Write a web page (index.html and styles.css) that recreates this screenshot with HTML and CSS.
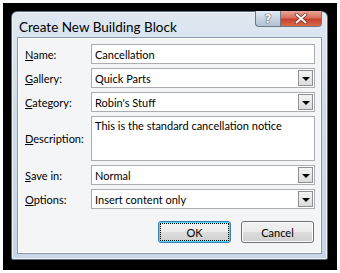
FILE: index.html
```html
<!DOCTYPE html>
<html>
<head>
<meta charset="utf-8">
<link rel="stylesheet" href="styles.css">
</head>
<body>
<div class="shadow">
  <div class="window">
    <div class="titlebar">
      <span class="title">Create New Building Block</span>
      <div class="caption-btns">
        <div class="cbtn help">?</div>
        <div class="cbtn close">
          <svg width="14" height="11" viewBox="0 0 14 11"><path d="M2.5 1.5 L11.5 9.5 M11.5 1.5 L2.5 9.5" stroke="#7a2a20" stroke-width="3.4" stroke-linecap="round"/><path d="M2.5 1.5 L11.5 9.5 M11.5 1.5 L2.5 9.5" stroke="#f6f6f6" stroke-width="2" stroke-linecap="round"/></svg>
        </div>
      </div>
    </div>
    <div class="panel">
      <div class="row">
        <label class="lbl"><u>N</u>ame:</label>
        <div class="field">Cancellation</div>
      </div>
      <div class="row">
        <label class="lbl"><u>G</u>allery:</label>
        <div class="field combo">Quick Parts<span class="arrow"></span></div>
      </div>
      <div class="row">
        <label class="lbl"><u>C</u>ategory:</label>
        <div class="field combo">Robin's Stuff<span class="arrow"></span></div>
      </div>
      <div class="row desc">
        <label class="lbl"><u>D</u>escription:</label>
        <div class="field area">This is the standard cancellation notice</div>
      </div>
      <div class="row">
        <label class="lbl"><u>S</u>ave in:</label>
        <div class="field combo">Normal<span class="arrow"></span></div>
      </div>
      <div class="row">
        <label class="lbl"><u>O</u>ptions:</label>
        <div class="field combo">Insert content only<span class="arrow"></span></div>
      </div>
      <div class="buttons">
        <div class="btn ok"><span class="focus">OK</span></div>
        <div class="btn">Cancel</div>
      </div>
    </div>
  </div>
</div>
</body>
</html>
```
FILE: styles.css
```css
html, body {
  margin: 0;
  padding: 0;
  background: #fff;
}
body {
  width: 340px;
  height: 273px;
  font-family: Lato, "Noto Sans", sans-serif;
  font-size: 11px;
  color: #000;
}
.shadow {
  margin: 3px 0 0 3px;
  width: 334px;
  height: 267px;
  background: #000;
  box-sizing: border-box;
  padding: 8px 0 0 8px;
}
.window {
  width: 317px;
  height: 249px;
  box-sizing: border-box;
  background: linear-gradient(#dfe8f1, #cfdceb 40%, #c7d6e6);
  border: 1px solid #5a6a7a;
  border-radius: 6px 6px 2px 2px;
  box-shadow: inset 0 0 0 1px #eef4fa;
  padding: 0 5px 5px 5px;
  display: flex;
  flex-direction: column;
}
.titlebar {
  height: 25px;
  display: flex;
  justify-content: space-between;
  align-items: flex-start;
}
.title {
  font-family: Lato, sans-serif;
  font-size: 13.5px;
  padding: 7px 0 0 2px;
  color: #000;
}
.caption-btns {
  display: flex;
  margin-top: -1px;
}
.cbtn {
  height: 16px;
  box-sizing: border-box;
  border: 1px solid #6b7888;
  border-top: none;
  display: flex;
  align-items: center;
  justify-content: center;
}
.help {
  width: 25px;
  border-radius: 0 0 0 4px;
  border-right: none;
  background: linear-gradient(#e4ecf4, #c8d4e2 50%, #b2c2d4);
  color: #fff;
  font-family: "DejaVu Sans", sans-serif;
  font-weight: bold;
  font-size: 12px;
  text-shadow: 0 0 1px #405060, 0 0 1px #405060, 0 0 1px #405060;
}
.close {
  width: 42px;
  border-radius: 0 0 4px 0;
  background: linear-gradient(#e8a89a, #d7705d 45%, #c6412d 55%, #d96a48);
}
.panel {
  flex: 1;
  border: 1px solid #8c9cad;
  background: #f4f5f6;
  box-shadow: inset 0 0 0 1px #ffffff;
  padding: 6px 6px 0 7px;
  display: flex;
  flex-direction: column;
  gap: 4px;
}
.row {
  display: flex;
  align-items: center;
  height: 20px;
}
.row.desc {
  height: 45px;
}
.lbl {
  width: 66px;
  color: #000;
}
.lbl u {
  text-decoration: underline;
  text-underline-offset: 1px;
}
.field {
  flex: 1;
  height: 100%;
  box-sizing: border-box;
  border: 1px solid #abadb3;
  background: #fff;
  padding: 0 3px;
  display: flex;
  align-items: center;
  position: relative;
}
.field.area {
  align-items: flex-start;
  padding-top: 2px;
}
.combo .arrow {
  position: absolute;
  right: 1px;
  top: 1px;
  width: 15px;
  height: 16px;
  box-sizing: border-box;
  border: 1px solid #8e8f8f;
  background: linear-gradient(#f4f4f4, #dcdcdc);
}
.combo .arrow::after {
  content: "";
  position: absolute;
  left: 3px;
  top: 6px;
  border-left: 4px solid transparent;
  border-right: 4px solid transparent;
  border-top: 4px solid #000;
}
.buttons {
  display: flex;
  justify-content: flex-end;
  gap: 10px;
  margin-top: 8px;
  padding-right: 1px;
}
.btn {
  width: 73px;
  height: 22px;
  box-sizing: border-box;
  border: 1px solid #707070;
  border-radius: 3px;
  background: linear-gradient(#f2f2f2 0%, #ebebeb 48%, #dddddd 52%, #cfcfcf 100%);
  box-shadow: inset 0 0 0 1px #fbfbfb;
  display: flex;
  align-items: center;
  justify-content: center;
}
.btn.ok {
  border-color: #3c7fb1;
  box-shadow: inset 0 0 0 1px #48d8fb;
  padding: 2px;
}
.btn.ok .focus {
  flex: 1;
  align-self: stretch;
  display: flex;
  align-items: center;
  justify-content: center;
  outline: 1px dotted #000;
}
```
